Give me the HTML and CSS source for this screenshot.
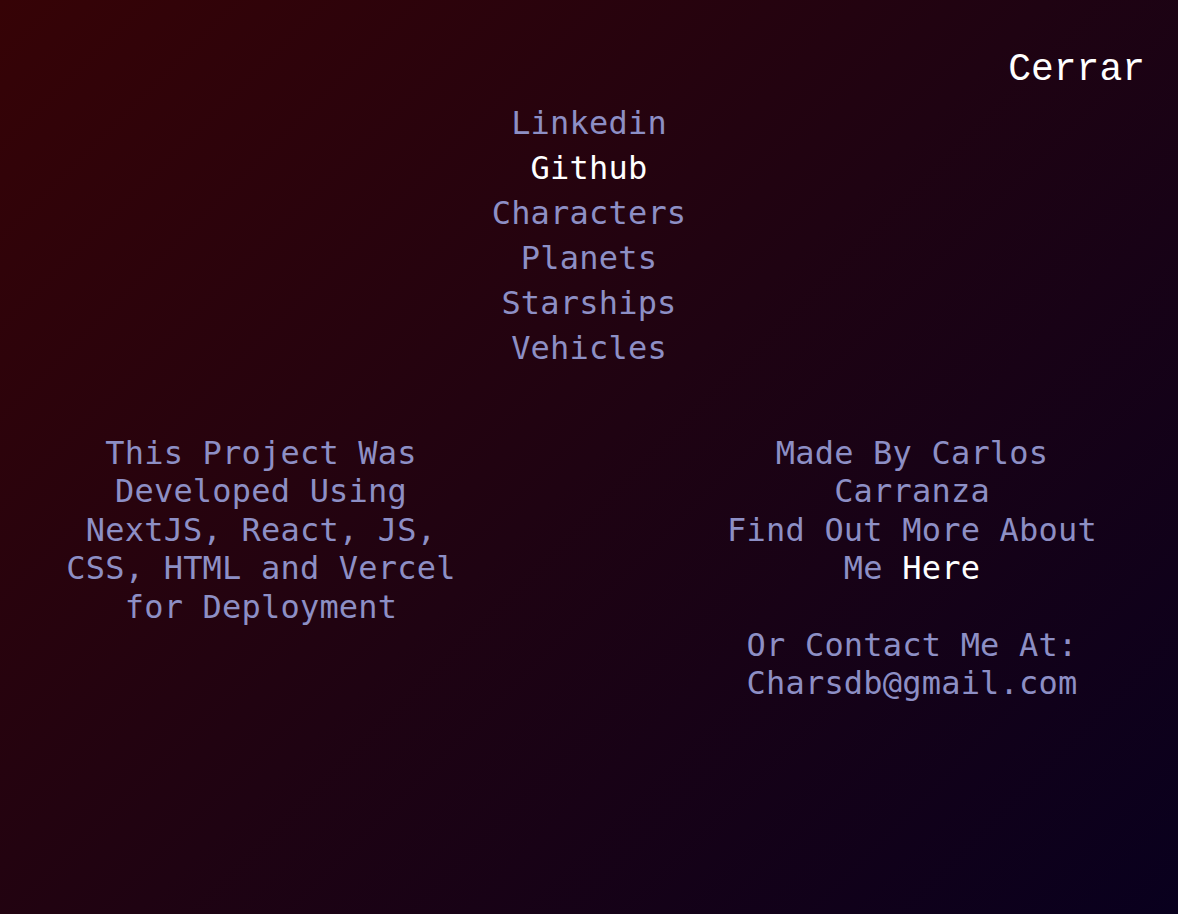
FILE: index.html
```html
<!DOCTYPE html>
<html lang="es">
<head>
<meta charset="utf-8">
<title>Menu</title>
<link rel="stylesheet" href="styles.css">
</head>
<body>
<div class="page">
  <header class="top">
    <button class="close">Cerrar</button>
  </header>
  <nav class="menu">
    <a href="#">Linkedin</a>
    <a href="#" class="active">Github</a>
    <a href="#">Characters</a>
    <a href="#">Planets</a>
    <a href="#">Starships</a>
    <a href="#">Vehicles</a>
  </nav>
  <section class="info">
    <p class="col">This Project Was Developed Using NextJS, React, JS, CSS, HTML and Vercel for Deployment</p>
    <p class="col">Made By Carlos Carranza<br>Find Out More About Me <a href="#" class="here">Here</a><br><br>Or Contact Me At: Charsdb@gmail.com</p>
  </section>
</div>
</body>
</html>
```
FILE: styles.css
```css
html, body {
  margin: 0;
  padding: 0;
  height: 100%;
}
body {
  background: linear-gradient(135deg, #360306 0%, #1f0312 50%, #09001e 100%);
  font-family: "DejaVu Sans Mono", "Liberation Mono", monospace;
  color: #8d8fc5;
  min-height: 914px;
}
.page {
  display: flex;
  flex-direction: column;
}
.top {
  display: flex;
  justify-content: flex-end;
  padding: 47px 33px 0 0;
}
.close {
  background: none;
  border: 0;
  padding: 0;
  margin: 0;
  color: #ffffff;
  font-family: "Liberation Mono", "Courier New", monospace;
  font-size: 38px;
  line-height: 46px;
  cursor: pointer;
}
.menu {
  display: flex;
  flex-direction: column;
  align-items: center;
  margin-top: 8px;
}
.menu a {
  color: #8d8fc5;
  text-decoration: none;
  font-size: 32px;
  line-height: 45px;
  letter-spacing: 0.2px;
}
.menu a.active {
  color: #ffffff;
}
.info {
  display: flex;
  justify-content: space-between;
  padding: 0 66px 0 61px;
  margin-top: 63px;
}
.col {
  width: 400px;
  margin: 0;
  text-align: center;
  font-size: 32px;
  line-height: 38.4px;
  letter-spacing: 0.2px;
}
.here {
  color: #ffffff;
  text-decoration: none;
}
```
